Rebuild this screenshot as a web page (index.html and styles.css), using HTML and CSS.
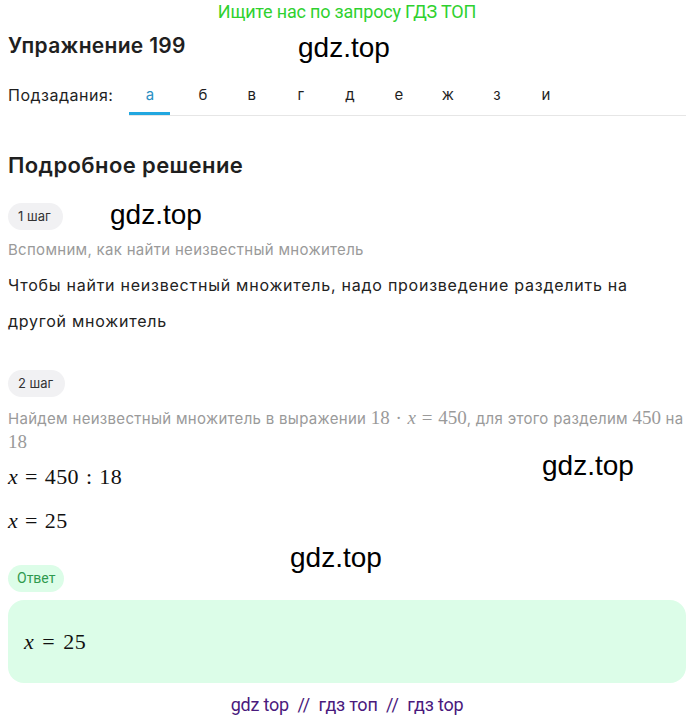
FILE: index.html
```html
<!DOCTYPE html>
<html lang="ru">
<head>
<meta charset="utf-8">
<title>Упражнение 199</title>
<link rel="stylesheet" href="styles.css">
</head>
<body>
<div class="page">
  <div class="promo">Ищите нас по запросу ГДЗ ТОП</div>
  <h1 class="title">Упражнение 199</h1>
  <div class="tabs">
    <span class="tabs-label">Подзадания:</span>
    <div class="tab-list">
      <span class="tab active">а</span>
      <span class="tab">б</span>
      <span class="tab">в</span>
      <span class="tab">г</span>
      <span class="tab">д</span>
      <span class="tab">е</span>
      <span class="tab">ж</span>
      <span class="tab">з</span>
      <span class="tab">и</span>
    </div>
  </div>
  <h2 class="section">Подробное решение</h2>

  <div class="step">
    <span class="pill">1 шаг</span>
    <p class="hint">Вспомним, как найти неизвестный множитель</p>
    <p class="text">Чтобы найти неизвестный множитель, надо произведение разделить на другой множитель</p>
  </div>

  <div class="step step2">
    <span class="pill">2 шаг</span>
    <p class="hint hint-tight">Найдем неизвестный множитель в выражении <span class="m">18 <span class="op">·</span> <i>x</i> <span class="op">=</span> 450</span>, для этого разделим <span class="m">450</span> на <span class="m">18</span></p>
    <p class="math"><i>x</i> = 450 : 18</p>
    <p class="math"><i>x</i> = 25</p>
  </div>

  <span class="pill pill-answer">Ответ</span>
  <div class="answer"><span class="math-inline"><i>x</i> = 25</span></div>

  <div class="footer">gdz top &nbsp;//&nbsp; гдз топ &nbsp;//&nbsp; гдз top</div>

  <span class="wm wm1">gdz.top</span>
  <span class="wm wm2">gdz.top</span>
  <span class="wm wm3">gdz.top</span>
  <span class="wm wm4">gdz.top</span>
</div>
</body>
</html>
```

FILE: styles.css
```css
* { box-sizing: border-box; }
html, body { margin: 0; padding: 0; background: #fff; }
body { font-family: Inter, "Noto Sans", sans-serif; color: #1f1f1f; }
.page { position: relative; padding: 0 9px 0 8px; min-height: 720px; }
.promo { text-align: center; color: #2fd12f; font-family: Roboto, sans-serif; font-size: 18px; line-height: 24px; letter-spacing: -0.2px; }
.title { margin: 10px 0 0; font-size: 21px; font-weight: 600; line-height: 24px; letter-spacing: 0.3px; }
.tabs { display: flex; align-items: stretch; margin-top: 25px; }
.tabs-label { font-size: 16px; line-height: 24px; padding-right: 16px; letter-spacing: 0.5px; }
.tab-list { display: flex; flex: 1; border-bottom: 1px solid #e6e6e6; }
.tab { width: 49px; text-align: center; font-size: 15px; line-height: 24px; height: 32px; }
.tab.active { color: #2b8fc4; box-shadow: inset 0 -3px 0 #22a7e0; width: 41px; margin-right: 8px; }
.section { margin: 35px 0 0; font-size: 22px; font-weight: 600; line-height: 28px; letter-spacing: 0.4px; }
.step { margin-top: 24px; }
.step2 { margin-top: 31px; }
.pill { display: inline-block; background: #f1f1f3; color: #333; font-size: 13px; line-height: 27px; height: 27px; padding: 0 12px 0 10px; border-radius: 14px; vertical-align: top; }
.hint { margin: 9px 0 0; color: #9a9a9a; font-size: 15px; line-height: 22px; letter-spacing: 0.3px; }
.hint-tight { line-height: 23px; }
.text { margin: 6px 0 0; font-size: 16px; line-height: 36px; color: #222; letter-spacing: 0.75px; }
.m { font-family: "Liberation Serif", "DejaVu Serif", serif; font-size: 19px; letter-spacing: 0; }
.m .op { margin: 0 1px; }
.math { margin: 9px 0 0; font-family: "Liberation Serif", "DejaVu Serif", serif; font-size: 22px; line-height: 28px; color: #111; word-spacing: 1px; letter-spacing: 0.4px; }
.math + .math { margin-top: 16px; }
.pill-answer { margin-top: 30px; background: #dcfde8; color: #2f9a4e; font-family: Roboto, sans-serif; font-size: 14px; padding: 0 9px; }
.answer { margin-top: 8px; background: #dcfde8; border-radius: 16px; height: 83px; display: flex; align-items: center; padding: 0 16px; }
.math-inline { font-family: "Liberation Serif", "DejaVu Serif", serif; font-size: 22px; color: #111; word-spacing: 2px; letter-spacing: 0.5px; }
.footer { text-align: center; color: #4a1a7d; font-family: Roboto, sans-serif; font-size: 18px; line-height: 24px; margin-top: 10px; letter-spacing: -0.2px; }
.wm { position: absolute; font-family: "Liberation Sans", Arial, sans-serif; font-size: 28px; color: #000; line-height: 1; }
.wm1 { left: 298px; top: 34px; }
.wm2 { left: 110px; top: 201px; }
.wm3 { left: 542px; top: 452px; }
.wm4 { left: 290px; top: 544px; }
```
